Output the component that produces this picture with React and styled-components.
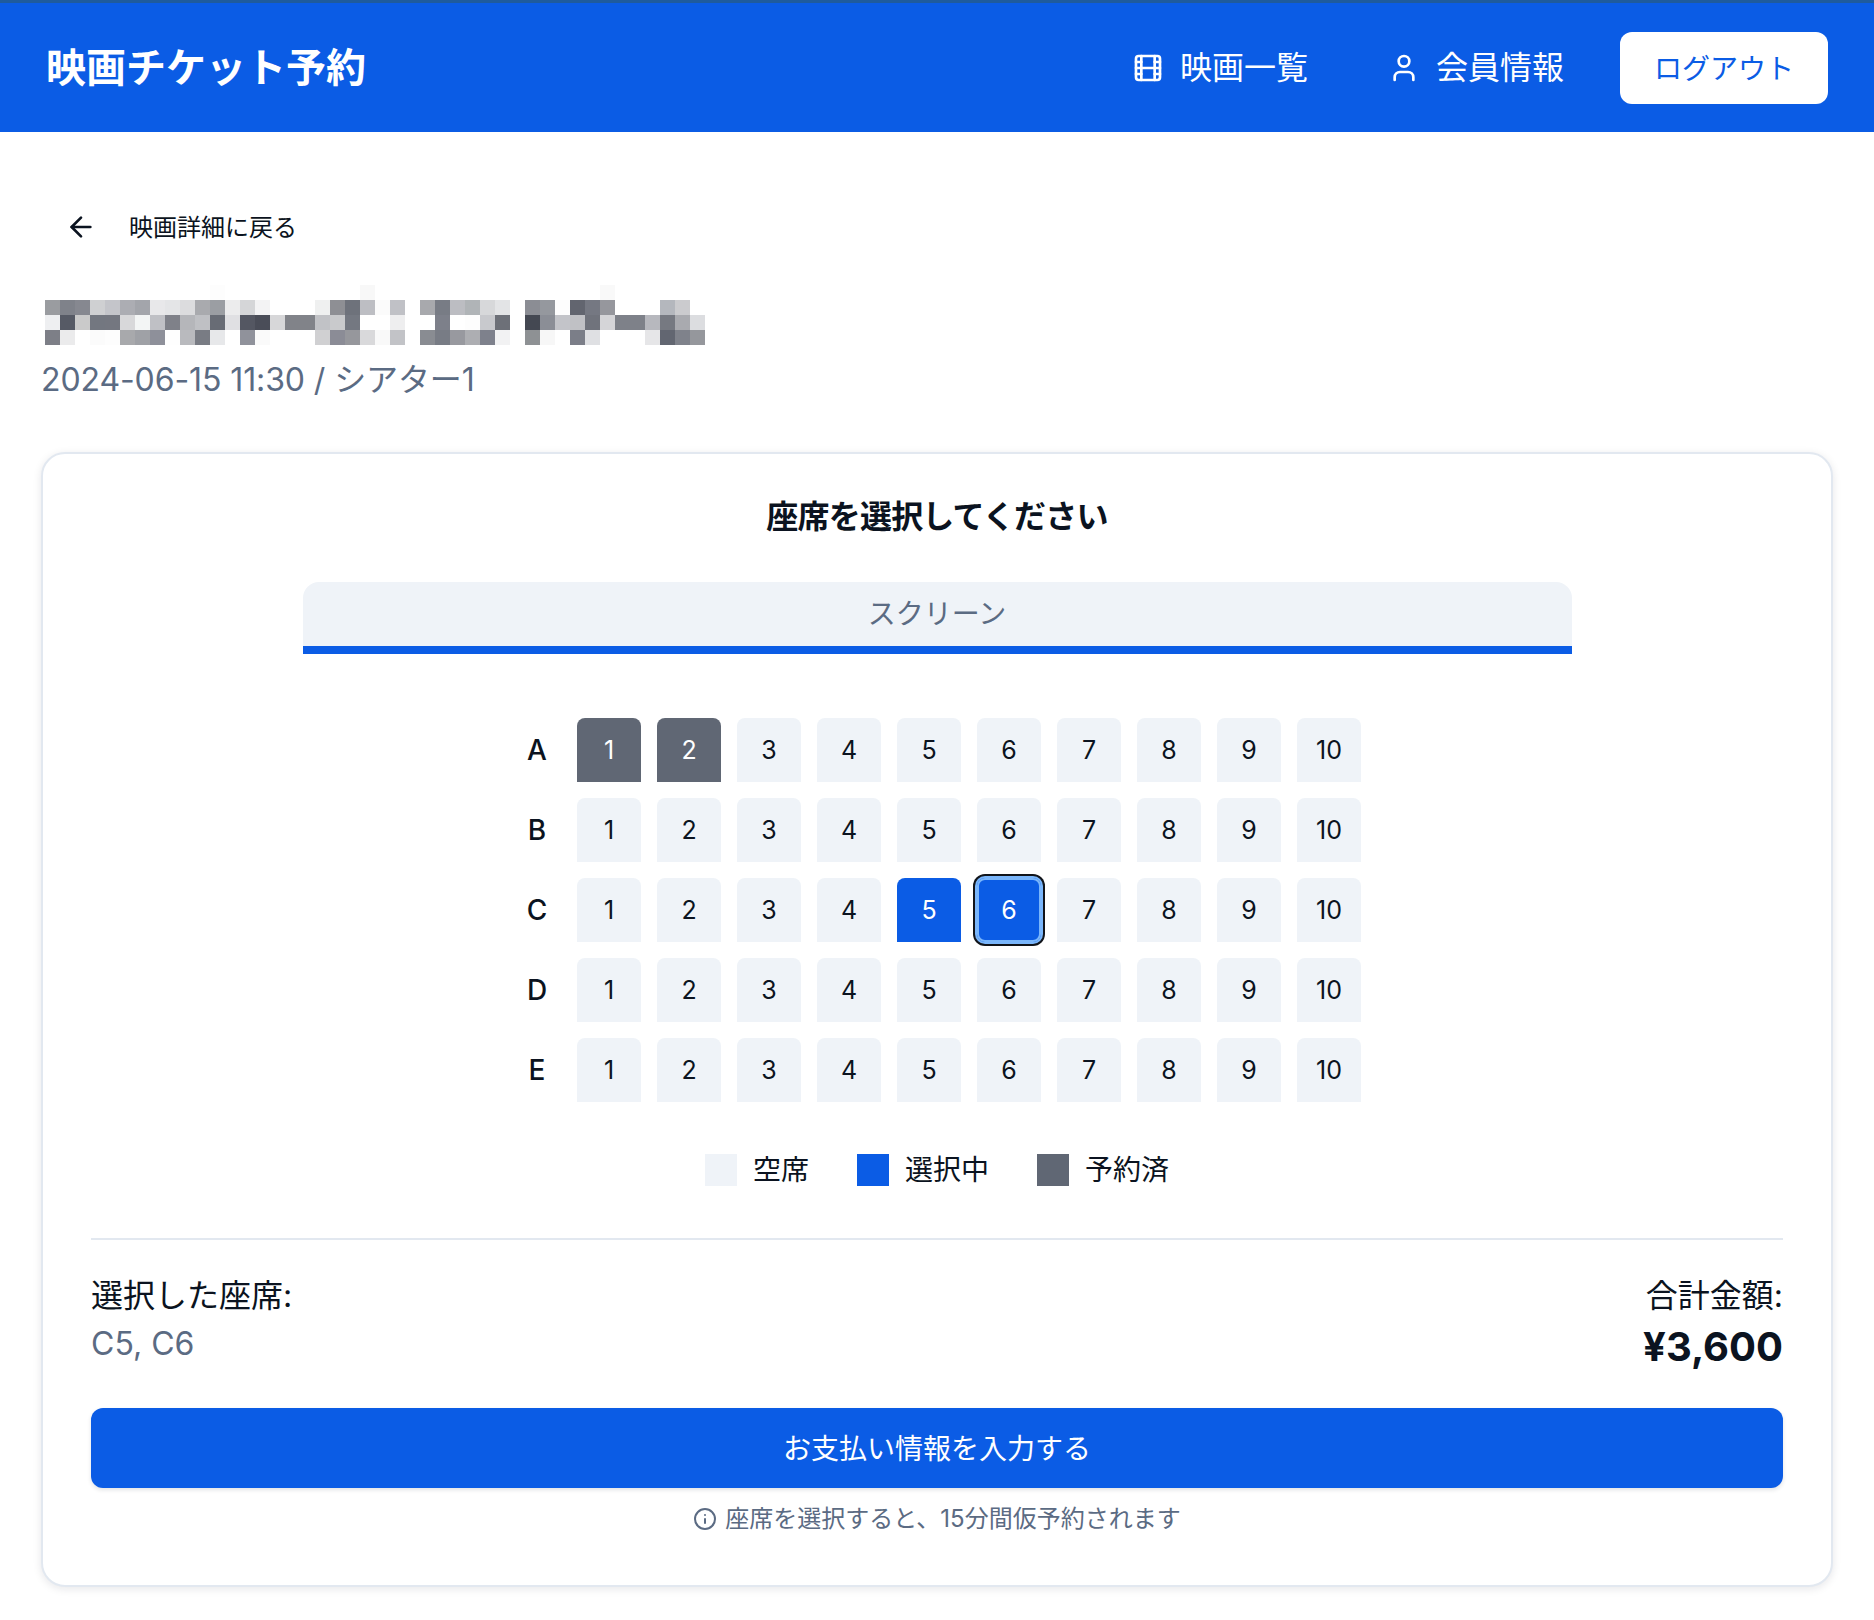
import React from "react";
import styled, { createGlobalStyle, css } from "styled-components";
import { ArrowLeft, Film, Info, User } from "lucide-react";

const BLUE = "#0b5ce5";
const SLATE = "#5b6b83";
const INK = "#0b1320";
const SEAT = "#eff3f8";
const TAKEN = "#606774";
const LINE = "#e2e8f0";

const GlobalStyle = createGlobalStyle`
  * { box-sizing: border-box; }
  html, body { margin: 0; padding: 0; background: #fff; }
  body {
    font-family: Inter, "Noto Sans CJK JP", sans-serif;
    color: ${INK};
  }
  button { font-family: inherit; }
`;

const Header = styled.header`
  height: 132px;
  border-top: 3px solid #1f5b9c;
  background: ${BLUE};
  padding: 0 46px;
  display: flex;
  align-items: center;
  justify-content: space-between;
  color: #fff;
`;

const Logo = styled.div`
  font-size: 40px;
  font-weight: 700;
  line-height: 48px;
`;

const Nav = styled.nav`
  display: flex;
  align-items: center;
`;

const NavItem = styled.a`
  display: flex;
  align-items: center;
  gap: 16px;
  padding: 0 32px;
  font-size: 32px;
  line-height: 48px;
  & + & { margin-left: 16px; }
`;

const LogoutButton = styled.button`
  width: 208px;
  height: 72px;
  margin-left: 24px;
  border: 0;
  border-radius: 12px;
  background: #fff;
  color: ${BLUE};
  font-size: 28px;
  padding: 0 0 2px;
`;

const Main = styled.main`
  padding: 0 41px 35px;
`;

const BackLink = styled.a`
  display: flex;
  align-items: center;
  gap: 32px;
  height: 48px;
  margin-top: 71px;
  padding-left: 24px;
  font-size: 24px;
  color: ${INK};
`;

const BackLabel = styled.span`
  padding-bottom: 4px;
`;

const Mosaic = styled.svg`
  display: block;
  width: 660px;
  height: 60px;
  margin: 34px 0 0 4px;
`;

const Showing = styled.p`
  margin: 11px 0 0;
  font-size: 32px;
  line-height: 48px;
  letter-spacing: -0.1px;
  color: ${SLATE};
`;

const Card = styled.section`
  margin-top: 48px;
  border: 2px solid ${LINE};
  border-radius: 24px;
  background: #fff;
  padding: 39px 48px 48px;
  box-shadow: 0 2px 8px rgba(15, 23, 42, 0.1);
`;

const CardTitle = styled.h2`
  margin: 0;
  font-size: 32px;
  font-weight: 700;
  line-height: 48px;
  letter-spacing: -0.8px;
  text-align: center;
`;

const Screen = styled.div`
  width: 75%;
  height: 72px;
  margin: 41px auto 64px;
  padding-bottom: 4px;
  border-bottom: 8px solid ${BLUE};
  border-radius: 16px 16px 0 0;
  background: ${SEAT};
  display: flex;
  align-items: center;
  justify-content: center;
  font-size: 28px;
  color: ${SLATE};
`;

const SeatMap = styled.div`
  display: flex;
  flex-direction: column;
  align-items: center;
  gap: 16px;
`;

const SeatRow = styled.div`
  display: flex;
  gap: 16px;
`;

const RowLabel = styled.div`
  width: 48px;
  display: flex;
  align-items: center;
  justify-content: center;
  font-size: 28px;
  font-weight: 500;
`;

const seatStates = {
  free: css`
    background: ${SEAT};
    color: ${INK};
  `,
  taken: css`
    background: ${TAKEN};
    color: #fff;
  `,
  selected: css`
    background: ${BLUE};
    color: #fff;
  `,
  focused: css`
    background: ${BLUE};
    color: #fff;
    border-radius: 8px;
    box-shadow: inset 0 0 0 2px #7ab6fb, 0 0 0 2px #7ab6fb, 0 0 0 4px #11141a;
  `,
};

const Seat = styled.button`
  width: 64px;
  height: 64px;
  padding: 0 0 1px;
  border: 0;
  border-radius: 8px 8px 0 0;
  font-size: 25px;
  display: flex;
  align-items: center;
  justify-content: center;
  ${(p) => seatStates[p.$state]}
`;

const Legend = styled.div`
  display: flex;
  justify-content: center;
  gap: 48px;
  margin-top: 52px;
`;

const LegendItem = styled.div`
  display: flex;
  align-items: center;
  gap: 16px;
  font-size: 28px;
  line-height: 32px;
`;

const Swatch = styled.span`
  width: 32px;
  height: 32px;
  background: ${(p) => p.$color};
`;

const Summary = styled.div`
  display: flex;
  justify-content: space-between;
  margin-top: 52px;
  padding-top: 32px;
  border-top: 2px solid ${LINE};
`;

const SummaryBlock = styled.div`
  text-align: ${(p) => p.$align || "left"};
`;

const SummaryLabel = styled.div`
  font-size: 32px;
  line-height: 48px;
`;

const SeatList = styled.div`
  font-size: 32px;
  line-height: 48px;
  color: ${SLATE};
`;

const Total = styled.div`
  font-size: 40px;
  font-weight: 700;
  line-height: 56px;
  margin: -1px 0 -7px;
`;

const PayButton = styled.button`
  display: block;
  width: 100%;
  height: 80px;
  margin-top: 40px;
  padding: 0 0 3px;
  border: 0;
  border-radius: 12px;
  background: ${BLUE};
  color: #fff;
  font-size: 28px;
  box-shadow: 0 2px 4px rgba(15, 23, 42, 0.12);
`;

const Note = styled.div`
  display: flex;
  align-items: center;
  justify-content: center;
  gap: 8px;
  margin-top: 13px;
  font-size: 24px;
  line-height: 36px;
  color: ${SLATE};
`;

// pixelated movie title: one row of greys per 15px band
const mosaicRows = [
  "fff fff fff fff fff fff fff fff fff fff fff fdfdfd fff fff fff fff fff fff fff fff fff f8f8f8 fff fff fff fff fff fff fff fff fff fff fff fff fff fff fff f9f9f9 fff fff fff fff fff fff",
  "9a9ca0 7f828a 868890 cfd0d2 c4c5ca acadb3 a3a5ab e8e8ea e4e5e7 dcdcde a9aaae 9b9ea3 ececed d5d6d8 f3f3f4 fff fff fff eff0f0 8e8f94 6e727b bdbec3 fbfbfb c0c1c6 fff a8a9ad 787c85 bcbdc2 b0b4b7 d7d8da e3e4e6 fff 8b8d94 95989e fdfdfd 62656f 757882 96979d fff fff fff b4b7bd cbcbce fff",
  "eeeff1 565a65 cacaca 737780 747780 d8d8da f3f5f5 bfc0c5 7f8189 b5b6ba bfc0c4 686c75 e0e0e3 545762 4a4d58 d7d7d9 818389 818389 c1c2c6 c9cacc 747881 fff fff eeeeef fff fff 7d808a fff fdfdfd c8c9cd 6d7078 fff 444852 8b8e96 c3c4c9 c0c1c5 70737c d5d5d8 7e8189 7e8189 b7b8be 767981 a9aaaf dcdde0",
  "7d7f87 ebebec fff fbfbfb fdfdfd a8a9ac 9fa1a6 8e909a fefefe b9babe 797c84 e7e8ea fff 90929b fafafa fff fff fff d0d0d2 8b8c96 96979c d9d9db f9f9f9 c2c3c7 fff 898c92 787c85 98999f adaeb2 7e818c f2f2f3 fff 8e9194 f7f7f7 fff 7b7e88 dfe0e3 fff fff fff e6e6e8 626671 7f828b 95979c",
].map((row) => row.split(" "));

const seatState = (row, n) => {
  if (row === "A" && n <= 2) return "taken";
  if (row === "C" && n === 5) return "selected";
  if (row === "C" && n === 6) return "focused";
  return "free";
};

const rows = ["A", "B", "C", "D", "E"];
const numbers = [1, 2, 3, 4, 5, 6, 7, 8, 9, 10];

export default function App() {
  return (
    <>
      <GlobalStyle />
      <Header>
        <Logo>映画チケット予約</Logo>
        <Nav>
          <NavItem>
            <Film size={32} />
            映画一覧
          </NavItem>
          <NavItem>
            <User size={32} />
            会員情報
          </NavItem>
          <LogoutButton>ログアウト</LogoutButton>
        </Nav>
      </Header>
      <Main>
        <BackLink>
          <ArrowLeft size={32} />
          <BackLabel>映画詳細に戻る</BackLabel>
        </BackLink>
        <Mosaic viewBox="0 0 660 60" shapeRendering="crispEdges">
          {mosaicRows.map((row, y) =>
            row.map((c, x) => (
              <rect key={`${x}-${y}`} x={x * 15} y={y * 15} width="15" height="15" fill={`#${c}`} />
            ))
          )}
        </Mosaic>
        <Showing>2024-06-15 11:30 / シアター1</Showing>
        <Card>
          <CardTitle>座席を選択してください</CardTitle>
          <Screen>スクリーン</Screen>
          <SeatMap>
            {rows.map((row) => (
              <SeatRow key={row}>
                <RowLabel>{row}</RowLabel>
                {numbers.map((n) => (
                  <Seat key={n} $state={seatState(row, n)}>
                    {n}
                  </Seat>
                ))}
              </SeatRow>
            ))}
          </SeatMap>
          <Legend>
            <LegendItem>
              <Swatch $color={SEAT} />
              空席
            </LegendItem>
            <LegendItem>
              <Swatch $color={BLUE} />
              選択中
            </LegendItem>
            <LegendItem>
              <Swatch $color={TAKEN} />
              予約済
            </LegendItem>
          </Legend>
          <Summary>
            <SummaryBlock>
              <SummaryLabel>選択した座席:</SummaryLabel>
              <SeatList>C5, C6</SeatList>
            </SummaryBlock>
            <SummaryBlock $align="right">
              <SummaryLabel>合計金額:</SummaryLabel>
              <Total>¥3,600</Total>
            </SummaryBlock>
          </Summary>
          <PayButton>お支払い情報を入力する</PayButton>
          <Note>
            <Info size={24} />
            座席を選択すると、15分間仮予約されます
          </Note>
        </Card>
      </Main>
    </>
  );
}
